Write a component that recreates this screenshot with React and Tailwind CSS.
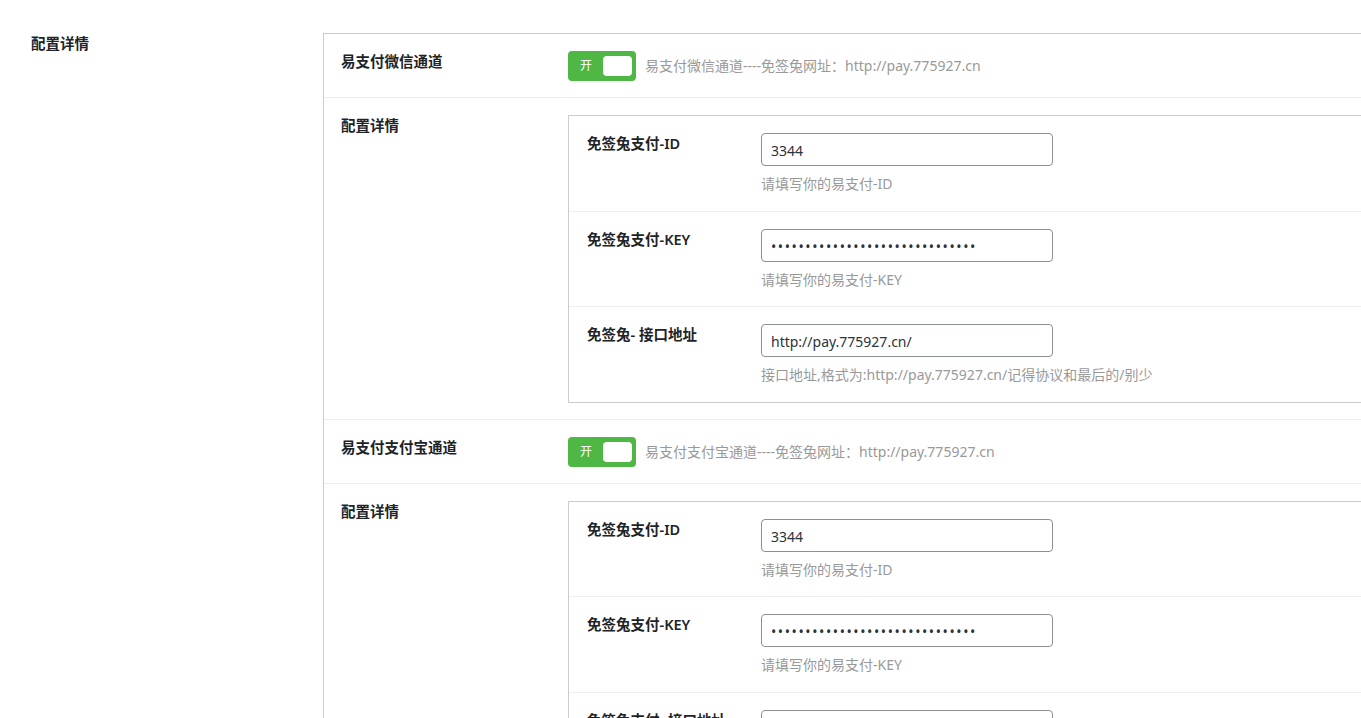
import React from "react";

const font = { fontFamily: '"Noto Sans", "Noto Sans CJK SC", sans-serif' };

function Switch() {
  return (
    <div className="flex items-center">
      <div className="flex h-[30px] w-[68px] items-center justify-between rounded-[4px] bg-[#4fb845] pl-[12px] pr-[4px]">
        <span className="text-[12px] leading-[12px] text-white">开</span>
        <span className="h-[20px] w-[29px] rounded-[4px] bg-white"></span>
      </div>
    </div>
  );
}

function SwitchRow({ label, help }) {
  return (
    <div className="flex border-b border-[#eeeeee] pt-[17px] pb-[16px] pl-[17px]">
      <div className="w-[227px] shrink-0 text-[14.5px] font-semibold leading-[20px] text-[#1d2327]">{label}</div>
      <div className="flex items-center">
        <Switch />
        <span className="ml-[9px] text-[14px] leading-[20px] text-[#999999]">{help}</span>
      </div>
    </div>
  );
}

function Field({ label, value, help, password, last }) {
  return (
    <div className={"flex pt-[17px] pb-[17px] pl-[18px] " + (last ? "" : "border-b border-[#eeeeee]")}>
      <div className="w-[174px] shrink-0 text-[14.5px] font-semibold leading-[20px] text-[#1d2327]">{label}</div>
      <div className="flex flex-col">
        <input
          readOnly
          type={password ? "password" : "text"}
          value={value}
          className={
            "h-[33px] w-[292px] rounded-[4px] border border-[#8c8f94] bg-white px-[9px] pt-[2px] text-[14px] text-[#2c3338] outline-none " +
            (password ? "tracking-[1.6px]" : "")
          }
          style={font}
        />
        <div className="mt-[8px] text-[14px] leading-[19.5px] text-[#999999]">{help}</div>
      </div>
    </div>
  );
}

function ConfigRow({ third }) {
  return (
    <div className="flex border-b border-[#eeeeee] pt-[17px] pb-[16px] pl-[17px]">
      <div className="w-[227px] shrink-0 text-[14.5px] font-semibold leading-[20px] text-[#1d2327]">配置详情</div>
      <div className="w-[900px] shrink-0 border border-[#cccccc]">
        <Field label="免签兔支付-ID" value="3344" help="请填写你的易支付-ID" />
        <Field label="免签兔支付-KEY" value="••••••••••••••••••••••••••••••" password help="请填写你的易支付-KEY" />
        <Field
          label={third}
          value="http://pay.775927.cn/"
          help="接口地址,格式为:http://pay.775927.cn/记得协议和最后的/别少"
          last
        />
      </div>
    </div>
  );
}

export default function App() {
  return (
    <div className="h-[718px] w-[1361px] overflow-hidden bg-white" style={font}>
      <div className="flex pt-[33px]">
        <div className="w-[323px] shrink-0 pl-[31px] text-[14.5px] font-semibold leading-[20px] text-[#1d2327]">配置详情</div>
        <div className="w-[1200px] shrink-0 border-t border-l border-[#cccccc]">
          <SwitchRow label="易支付微信通道" help="易支付微信通道----免签兔网址：http://pay.775927.cn" />
          <ConfigRow third="免签兔- 接口地址" />
          <SwitchRow label="易支付支付宝通道" help="易支付支付宝通道----免签兔网址：http://pay.775927.cn" />
          <ConfigRow third="免签兔支付- 接口地址" />
        </div>
      </div>
    </div>
  );
}
